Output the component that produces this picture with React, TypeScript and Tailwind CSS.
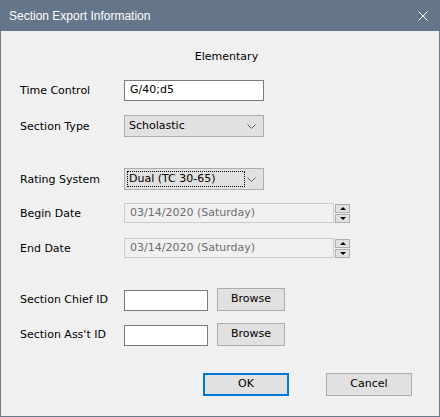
import { ReactNode } from 'react'

const titleFont = { fontFamily: '"Liberation Sans", Arial, sans-serif' }
const bodyFont = { fontFamily: '"DejaVu Sans", Tahoma, sans-serif' }

function Chevron() {
  return (
    <svg width="9" height="5" viewBox="0 0 9 5" className="text-[#606060]">
      <path d="M0.5 0.5 L4.5 4.5 L8.5 0.5" fill="none" stroke="currentColor" strokeWidth="1" />
    </svg>
  )
}

function Row({ label, top, h, children, end }: { label: string; top: string; h: string; children: ReactNode; end?: boolean }) {
  return (
    <div className={`flex ${end ? 'items-end' : 'items-center'} ${top} ${h}`}>
      <div className="w-[104px] self-center pt-[2px] text-[11px] text-black">{label}</div>
      {children}
    </div>
  )
}

function Spinner() {
  return (
    <div className="ml-px flex flex-col gap-px">
      <div className="flex h-[9px] w-[15px] items-center justify-center border border-[#adadad] bg-[#e1e1e1]">
        <div className="h-0 w-0 border-x-[3px] border-b-[3px] border-x-transparent border-b-black" />
      </div>
      <div className="flex h-[9px] w-[15px] items-center justify-center border border-[#adadad] bg-[#e1e1e1]">
        <div className="h-0 w-0 border-x-[3px] border-t-[3px] border-x-transparent border-t-black" />
      </div>
    </div>
  )
}

function DateField() {
  return (
    <div className="flex items-center">
      <div className="flex h-[20px] w-[210px] items-center border border-[#cccccc] bg-[#f0f0f0] pl-[5px] pt-px text-[11px] text-[#6d6d6d]">
        03/14/2020 (Saturday)
      </div>
      <Spinner />
    </div>
  )
}

function Browse() {
  return (
    <div className="ml-[9px] flex h-[23px] w-[68px] items-center justify-center border border-[#adadad] bg-[#e1e1e1] text-[11px]">
      Browse
    </div>
  )
}

export default function App() {
  return (
    <div className="h-[417px] w-[440px] overflow-hidden bg-[#f0f0f0]" style={bodyFont}>
      <div className="flex h-full flex-col border-x border-b border-[#6e7a8a]">
        {/* title bar */}
        <div
          className="-mx-px flex h-[31px] shrink-0 items-center justify-between bg-[#66768a] pl-[9px] pr-[12px] text-[12px] text-white"
          style={titleFont}
        >
          <span>Section Export Information</span>
          <svg width="10" height="10" viewBox="0 0 10 10">
            <path d="M0.5 0.5 L9.5 9.5 M9.5 0.5 L0.5 9.5" stroke="white" strokeWidth="1" />
          </svg>
        </div>

        <div className="flex flex-col pl-[19px]">
          <div className="mt-[18px] flex h-[16px] items-center justify-center pr-[6px] pt-px text-[11px]">Elementary</div>

          <Row label="Time Control" top="mt-[15px]" h="h-[21px]">
            <div className="flex h-[21px] w-[140px] items-center border border-[#7a7a7a] bg-white pl-[5px] text-[11px]">
              G/40;d5
            </div>
          </Row>

          <Row label="Section Type" top="mt-[14px]" h="h-[22px]">
            <div className="flex h-[22px] w-[140px] items-center justify-between border border-[#adadad] bg-[#e1e1e1] pl-[4px] pr-[7px] text-[11px]">
              <span>Scholastic</span>
              <Chevron />
            </div>
          </Row>

          <Row label="Rating System" top="mt-[31px]" h="h-[22px]">
            <div className="flex h-[22px] w-[140px] items-center justify-between border border-[#adadad] bg-[#e1e1e1] pl-[2px] pr-[7px] text-[11px]">
              <span className="flex h-[16px] w-[118px] items-center border border-dotted border-black pl-px">Dual (TC 30-65)</span>
              <Chevron />
            </div>
          </Row>

          <Row label="Begin Date" top="mt-[13px]" h="h-[20px]">
            <DateField />
          </Row>

          <Row label="End Date" top="mt-[15px]" h="h-[20px]">
            <DateField />
          </Row>

          <Row label="Section Chief ID" top="mt-[30px]" h="h-[23px]" end>
            <div className="h-[21px] w-[84px] border border-[#7a7a7a] bg-white" />
            <Browse />
          </Row>

          <Row label="Section Ass't ID" top="mt-[12px]" h="h-[23px]" end>
            <div className="h-[21px] w-[84px] border border-[#7a7a7a] bg-white" />
            <Browse />
          </Row>

          <div className="mt-[27px] flex h-[23px] text-[11px]">
            <div className="ml-[183px] flex h-[23px] w-[86px] items-center justify-center border-2 border-[#0078d7] bg-[#e1e1e1]">
              OK
            </div>
            <div className="ml-[37px] flex h-[23px] w-[86px] items-center justify-center border border-[#adadad] bg-[#e1e1e1]">
              Cancel
            </div>
          </div>
        </div>
      </div>
    </div>
  )
}
